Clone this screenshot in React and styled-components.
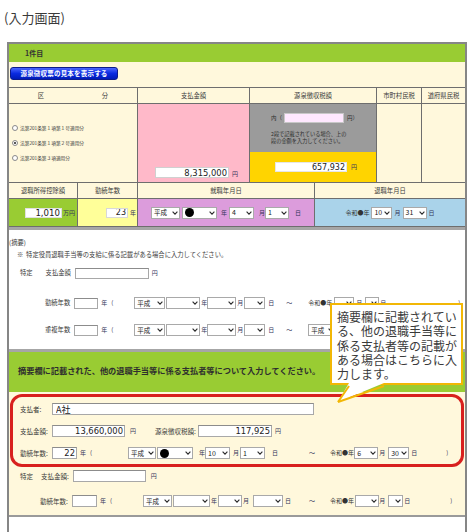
import React from "react";
import styled, { createGlobalStyle } from "styled-components";

const CREAM = "#fff8dc";
const GREEN = "#99cc33";
const LINE = "#6e6e6e";
const INK = "#333";
const UNIT_INK = "#33335a";

const GlobalStyle = createGlobalStyle`
  html, body { margin: 0; padding: 0; background: #ffffff; }
  body {
    font-family: "Noto Sans CJK JP", "Noto Sans", sans-serif;
    color: ${INK};
  }
  *, *::before, *::after { box-sizing: border-box; }
`;

const Page = styled.div`
  position: relative;
  width: 474px;
  height: 532px;
  overflow: hidden;
`;

const Caption = styled.div`
  height: 42px;
  padding: 10px 0 0 4px;
  font-size: 13px;
  line-height: 16px;
  color: #3a3a3a;
`;

const Frame = styled.div`
  margin-left: 7px;
  width: 460px;
  height: 490px;
  border: 2px solid #868686;
  border-bottom: none;
`;

const TitleBar = styled.div`
  height: 18px;
  background: ${GREEN};
  display: flex;
  align-items: center;
  padding-left: 16px;
  font-size: 7px;
  font-weight: 700;
`;

const ButtonBar = styled.div`
  height: 25px;
  background: ${CREAM};
  padding: 5px 0 0 1px;
`;

const SampleButton = styled.button`
  display: block;
  width: 108px;
  height: 13px;
  padding: 0;
  border: 1px solid #0b1a8c;
  border-radius: 3px;
  background: linear-gradient(#4a66ff, #0a2ae0 50%, #001bb8);
  color: #fff;
  font-family: inherit;
  font-size: 6.5px;
  font-weight: 700;
  line-height: 11px;
  letter-spacing: 0.2px;
`;

/* summary table */
const SummaryGrid = styled.div`
  display: grid;
  grid-template-columns: 69px 60px 112px 65px 62px 45px 43px;
  grid-template-rows: 16px 79px 16px 28px;
  border-top: 1px solid ${LINE};
  border-bottom: 3px solid #a6a6a6;
  background: ${CREAM};
`;

const Cell = styled.div`
  grid-column: ${(p) => p.$col};
  background: ${(p) => p.$bg || "transparent"};
  border-right: ${(p) => (p.$edge ? "none" : `1px solid ${LINE}`)};
  border-bottom: 1px solid ${LINE};
  display: flex;
  align-items: ${(p) => p.$align || "center"};
  justify-content: ${(p) => p.$justify || "center"};
  padding: ${(p) => p.$pad || "0"};
  min-width: 0;
`;

const Head = styled.span`
  font-size: 6.3px;
  line-height: 8px;
  color: #3a3a3a;
  white-space: nowrap;
`;

const RadioList = styled.div`
  display: flex;
  flex-direction: column;
  gap: 8px;
`;

const RadioRow = styled.div`
  display: flex;
  align-items: center;
  height: 7px;
  gap: 2px;
  font-size: 4.7px;
  white-space: nowrap;
  color: #3a3a3a;
`;

const RadioDot = styled.span`
  width: 6px;
  height: 6px;
  border-radius: 50%;
  border: 1px solid #8a8a8a;
  background: #fff;
  display: flex;
  align-items: center;
  justify-content: center;
  flex: none;
  &::after {
    content: "";
    width: 2.4px;
    height: 2.4px;
    border-radius: 50%;
    background: ${(p) => (p.$on ? "#222" : "transparent")};
  }
`;

const TaxCell = styled(Cell)`
  flex-direction: column;
  align-items: stretch;
  justify-content: flex-start;
`;

const TaxNote = styled.div`
  height: 48px;
  background: #9b9b9b;
  padding: 9px 0 0 21px;
  color: #2e2e2e;
`;

const TaxNoteRow = styled.div`
  display: flex;
  align-items: center;
  height: 10px;
  font-size: 5.5px;
`;

const TaxNoteText = styled.div`
  margin-top: 7px;
  font-size: 5.2px;
  line-height: 7px;
  white-space: nowrap;
`;

const TaxValue = styled.div`
  flex: 1;
  background: #ffd400;
  display: flex;
  align-items: center;
  justify-content: center;
  padding-left: 6px;
`;

/* form parts */
const Field = styled.input`
  display: block;
  flex: none;
  width: ${(p) => p.$w}px;
  height: ${(p) => p.$h || 11}px;
  margin: 0 0 0 ${(p) => p.$ml || 0}px;
  padding: 0 ${(p) => (p.$left ? 0 : 1)}px 0 ${(p) => (p.$left ? 3 : 1)}px;
  border: 1px solid ${(p) => p.$line || "#a8a8a8"};
  border-top-color: ${(p) => p.$line || "#8c8c8c"};
  background: ${(p) => p.$bg || "#fff"};
  font-family: ${(p) =>
    p.$left ? `"Noto Sans CJK JP", sans-serif` : `"DejaVu Sans", "Noto Sans CJK JP", sans-serif`};
  font-size: ${(p) => p.$fs || 8}px;
  line-height: 1;
  text-align: ${(p) => (p.$left ? "left" : "right")};
  color: #222;
  outline: none;
  border-radius: 0;
`;

const Unit = styled.span`
  flex: none;
  margin-left: ${(p) => p.$ml || 0}px;
  font-size: ${(p) => p.$fs || 6}px;
  line-height: 8px;
  color: ${(p) => p.$ink || UNIT_INK};
  white-space: nowrap;
`;

const Label = styled.span`
  flex: none;
  width: ${(p) => (p.$w ? `${p.$w}px` : "auto")};
  margin-left: ${(p) => p.$ml || 0}px;
  font-size: ${(p) => p.$fs || 6.3}px;
  line-height: 8px;
  color: #3a3a3a;
  white-space: nowrap;
`;

const SelectBox = styled.div`
  flex: none;
  display: flex;
  align-items: center;
  justify-content: space-between;
  width: ${(p) => p.$w}px;
  height: ${(p) => p.$h || 12}px;
  margin-left: ${(p) => p.$ml || 0}px;
  padding: 0 1px 0 2px;
  background: #fff;
  border: 1px solid #a9a9a9;
  font-size: ${(p) => p.$fs || 7}px;
  line-height: 1;
  color: #222;
  white-space: nowrap;
`;

const Blot = styled.span`
  width: 9px;
  height: 9px;
  border-radius: 50%;
  background: #000;
`;

const Chevron = () => (
  <svg width="6" height="4" viewBox="0 0 6 4" aria-hidden="true">
    <polyline points="0.6,0.6 3,3.2 5.4,0.6" fill="none" stroke="#2a2a2a" strokeWidth="1.1" />
  </svg>
);

const Select = ({ value, w, ml, h, fs }) => (
  <SelectBox $w={w} $ml={ml} $h={h} $fs={fs}>
    {value === "dot" ? <Blot /> : <span>{value}</span>}
    <Chevron />
  </SelectBox>
);

/* remarks area */
const NoteArea = styled.div`
  height: 119px;
  background: #fff;
  padding-top: 7px;
`;

const Line = styled.div`
  display: flex;
  align-items: center;
  height: ${(p) => p.$h}px;
  margin-top: ${(p) => p.$mt || 0}px;
  padding-left: ${(p) => p.$pl || 0}px;
`;

const OtherBand = styled.div`
  height: 43px;
  border-top: 3px solid #a6a6a6;
  background: ${GREEN};
  padding: 13px 0 0 9px;
  font-size: 8.2px;
  line-height: 10px;
  font-weight: 700;
  color: #2e2e2e;
  white-space: nowrap;
`;

const OtherArea = styled.div`
  height: 125px;
  background: ${CREAM};
  border-bottom: 2px solid #9a9a9a;
  padding-top: 2px;
`;

const PayerBox = styled.div`
  height: 73px;
  margin: 0 1px;
  border: 3px solid #d8201e;
  border-radius: 12px;
  padding-top: 1px;
`;

/* callout */
const Callout = styled.div`
  position: absolute;
  left: 330px;
  top: 303px;
  width: 133px;
  height: 82px;
  background: #fff;
  border: 2px solid #f2b705;
  padding: 5px 0 0 5px;
  color: #3a3a3a;
`;

const CalloutLine = styled.div`
  height: 14.3px;
  font-size: 12px;
  line-height: 14.3px;
  white-space: nowrap;
`;

const Tail = styled.svg`
  position: absolute;
  left: 2px;
  top: 78px;
`;

const radioOptions = [
  { text: "法第201条第１項第１号適用分", on: false },
  { text: "法第201条第１項第２号適用分", on: true },
  { text: "法第201条第３項適用分", on: false },
];

const calloutLines = [
  "摘要欄に記載されてい",
  "る、他の退職手当等に",
  "係る支払者等の記載が",
  "ある場合はこちらに入",
  "力します。",
];

export default function App() {
  return (
    <>
      <GlobalStyle />
      <Page>
        <Caption>(入力画面)</Caption>
        <Frame>
          <TitleBar>1件目</TitleBar>
          <ButtonBar>
            <SampleButton type="button">源泉徴収票の見本を表示する</SampleButton>
          </ButtonBar>

          <SummaryGrid>
            <Cell $col="1 / span 2" $justify="space-around">
              <Head>区</Head>
              <Head>分</Head>
            </Cell>
            <Cell $col="3">
              <Head>支払金額</Head>
            </Cell>
            <Cell $col="4 / span 2">
              <Head>源泉徴収税額</Head>
            </Cell>
            <Cell $col="6">
              <Head>市町村民税</Head>
            </Cell>
            <Cell $col="7" $edge>
              <Head>道府県民税</Head>
            </Cell>

            <Cell $col="1 / span 2" $justify="flex-start" $pad="0 0 0 3px">
              <RadioList>
                {radioOptions.map((o) => (
                  <RadioRow key={o.text}>
                    <RadioDot $on={o.on} />
                    {o.text}
                  </RadioRow>
                ))}
              </RadioList>
            </Cell>
            <Cell $col="3" $bg="#ffb9c9" $align="flex-end" $justify="flex-end" $pad="0 11px 4px 0">
              <Field readOnly $w={74} $h={11} $fs={8.4} $line="#d0d0d0" value="8,315,000" />
              <Unit $ml={3}>円</Unit>
            </Cell>
            <TaxCell $col="4 / span 2">
              <TaxNote>
                <TaxNoteRow>
                  内（
                  <Field readOnly $w={60} $h={10} $ml={2} $bg="#ffe8ff" $line="#c8c8c8" value="" />
                  <Unit $ml={3} $fs={5.5} $ink="#2e2e2e">円）</Unit>
                </TaxNoteRow>
                <TaxNoteText>
                  2段で記載されている場合、上の
                  <br />
                  段の金額を入力してください。
                </TaxNoteText>
              </TaxNote>
              <TaxValue>
                <Field readOnly $w={72} $h={10} $fs={8} $line="#e6e6e6" value="657,932" />
                <Unit $ml={4}>円</Unit>
              </TaxValue>
            </TaxCell>
            <Cell $col="6" />
            <Cell $col="7" $edge />

            <Cell $col="1">
              <Head>退職所得控除額</Head>
            </Cell>
            <Cell $col="2">
              <Head>勤続年数</Head>
            </Cell>
            <Cell $col="3 / span 2">
              <Head>就職年月日</Head>
            </Cell>
            <Cell $col="5 / span 3" $edge>
              <Head>退職年月日</Head>
            </Cell>

            <Cell $col="1" $bg={GREEN} $justify="flex-end" $pad="0 2px 0 0">
              <Field readOnly $w={37} $h={10} $fs={8.6} $line="#e0e0e0" value="1,010" />
              <Unit $ml={1}>万円</Unit>
            </Cell>
            <Cell $col="2" $bg="#ffff99" $justify="flex-end" $pad="0 1px 0 0">
              <Field readOnly $w={22} $h={10} $fs={8} $line="#d8d8d8" value="23" />
              <Unit $ml={2}>年</Unit>
            </Cell>
            <Cell $col="3 / span 2" $bg="#dc9cdc">
              <Select value="平成" w={29} fs={6.5} />
              <Select value="dot" w={35} ml={2} />
              <Unit $ml={4}>年</Unit>
              <Select value="4" w={25} ml={2} />
              <Unit $ml={5}>月</Unit>
              <Select value="1" w={24} />
              <Unit $ml={6}>日</Unit>
            </Cell>
            <Cell $col="5 / span 3" $bg="#aad3ea" $edge>
              <Unit $ink="#333">令和●年</Unit>
              <Select value="10" w={21} ml={2} />
              <Unit $ml={2}>月</Unit>
              <Select value="31" w={24} ml={2} />
              <Unit $ml={2}>日</Unit>
            </Cell>
          </SummaryGrid>

          <NoteArea>
            <Line $h={12}>
              <Label>(摘要)</Label>
            </Line>
            <Line $h={11} $pl={8}>
              <Label>※&nbsp;&nbsp;特定役員退職手当等の支給に係る記載がある場合に入力してください。</Label>
            </Line>
            <Line $h={12} $mt={7} $pl={11}>
              <Label>特定</Label>
              <Label $ml={13}>支払金額</Label>
              <Field readOnly $w={74} $h={11} $ml={4} value="" />
              <Unit $ml={3}>円</Unit>
            </Line>
            <Line $h={12} $mt={18} $pl={36}>
              <Label>勤続年数</Label>
              <Field readOnly $w={24} $h={11} $ml={4} value="" />
              <Unit $ml={3}>年</Unit>
              <Unit $ml={4}>(</Unit>
              <Select value="平成" w={31} ml={21} fs={6.5} />
              <Select value="" w={34} ml={1} />
              <Unit $ml={1}>年</Unit>
              <Select value="" w={29} />
              <Unit $ml={1}>月</Unit>
              <Select value="" w={21} ml={1} />
              <Unit $ml={3}>日</Unit>
              <Unit $ml={12}>～</Unit>
              <Unit $ml={16} $ink="#333">令和●年</Unit>
              <Select value="" w={20} ml={2} />
              <Unit $ml={2}>月</Unit>
              <Select value="" w={14} ml={3} />
              <Unit $ml={1}>日</Unit>
              <Unit $ml={72}>)</Unit>
            </Line>
            <Line $h={12} $mt={15} $pl={36}>
              <Label>重複年数</Label>
              <Field readOnly $w={24} $h={11} $ml={4} value="" />
              <Unit $ml={3}>年</Unit>
              <Unit $ml={4}>(</Unit>
              <Select value="平成" w={31} ml={21} fs={6.5} />
              <Select value="" w={34} ml={1} />
              <Unit $ml={1}>年</Unit>
              <Select value="" w={29} />
              <Unit $ml={1}>月</Unit>
              <Select value="" w={21} ml={1} />
              <Unit $ml={3}>日</Unit>
              <Unit $ml={12}>～</Unit>
              <Select value="平成" w={28} ml={16} fs={6.5} />
            </Line>
          </NoteArea>

          <OtherBand>摘要欄に記載された、他の退職手当等に係る支払者等について入力してください。</OtherBand>

          <OtherArea>
            <PayerBox>
              <Line $h={22} $pl={7}>
                <Label $w={32} $fs={6.5}>支払者:</Label>
                <Field readOnly $left $w={262} $h={12} $fs={9} value="A社" />
              </Line>
              <Line $h={22} $pl={7}>
                <Label $w={32} $fs={6.5}>支払金額:</Label>
                <Field readOnly $w={73} $h={12} $fs={8.4} value="13,660,000" />
                <Unit $ml={5}>円</Unit>
                <Label $w={43} $ml={19} $fs={6.5}>源泉徴収税額:</Label>
                <Field readOnly $w={74} $h={12} $fs={8.4} value="117,925" />
                <Unit $ml={3}>円</Unit>
              </Line>
              <Line $h={22} $pl={7}>
                <Label $w={32} $fs={6.5}>勤続年数:</Label>
                <Field readOnly $w={25} $h={12} $fs={8.4} value="22" />
                <Unit $ml={3}>年</Unit>
                <Unit $ml={4}>(</Unit>
                <Select value="平成" w={28} ml={36} fs={6.5} />
                <Select value="dot" w={36} ml={1} />
                <Unit $ml={6}>年</Unit>
                <Select value="10" w={25} />
                <Unit $ml={3}>月</Unit>
                <Select value="1" w={25} ml={1} />
                <Unit $ml={7}>日</Unit>
                <Unit $ml={31}>～</Unit>
                <Unit $ml={15} $ink="#333">令和●年</Unit>
                <Select value="6" w={24} />
                <Unit $ml={1}>月</Unit>
                <Select value="30" w={21} ml={3} />
                <Unit $ml={2}>日</Unit>
                <Unit $ml={29}>)</Unit>
              </Line>
            </PayerBox>
            <Line $h={16} $mt={1} $pl={11}>
              <Label $fs={6.5}>特定</Label>
              <Label $ml={8} $fs={6.5}>支払金額:</Label>
              <Field readOnly $w={73} $h={12} $ml={4} value="" />
              <Unit $ml={5}>円</Unit>
            </Line>
            <Line $h={16} $mt={9} $pl={31}>
              <Label $w={32} $fs={6.5}>勤続年数:</Label>
              <Field readOnly $w={25} $h={12} value="" />
              <Unit $ml={3}>年</Unit>
              <Unit $ml={4}>(</Unit>
              <Select value="平成" w={29} ml={31} fs={6.5} />
              <Select value="" w={37} ml={1} />
              <Unit $ml={1}>年</Unit>
              <Select value="" w={24} ml={1} />
              <Unit $ml={1}>月</Unit>
              <Select value="" w={30} ml={4} />
              <Unit $ml={2}>日</Unit>
              <Unit $ml={18}>～</Unit>
              <Unit $ml={15} $ink="#333">令和●年</Unit>
              <Select value="" w={24} ml={1} />
              <Unit>月</Unit>
              <Select value="" w={15} ml={3} />
              <Unit $ml={1}>日</Unit>
              <Unit $ml={40}>)</Unit>
            </Line>
          </OtherArea>
        </Frame>

        <Callout>
          {calloutLines.map((t) => (
            <CalloutLine key={t}>{t}</CalloutLine>
          ))}
          <Tail width="56" height="22" viewBox="0 0 56 22" aria-hidden="true">
            <polygon points="15,0 50,0 4,19" fill="#fff" />
            <line x1="15" y1="3" x2="4" y2="19" stroke="#f2b705" strokeWidth="2" />
            <line x1="50" y1="3" x2="4" y2="19" stroke="#f2b705" strokeWidth="2" />
          </Tail>
        </Callout>
      </Page>
    </>
  );
}
